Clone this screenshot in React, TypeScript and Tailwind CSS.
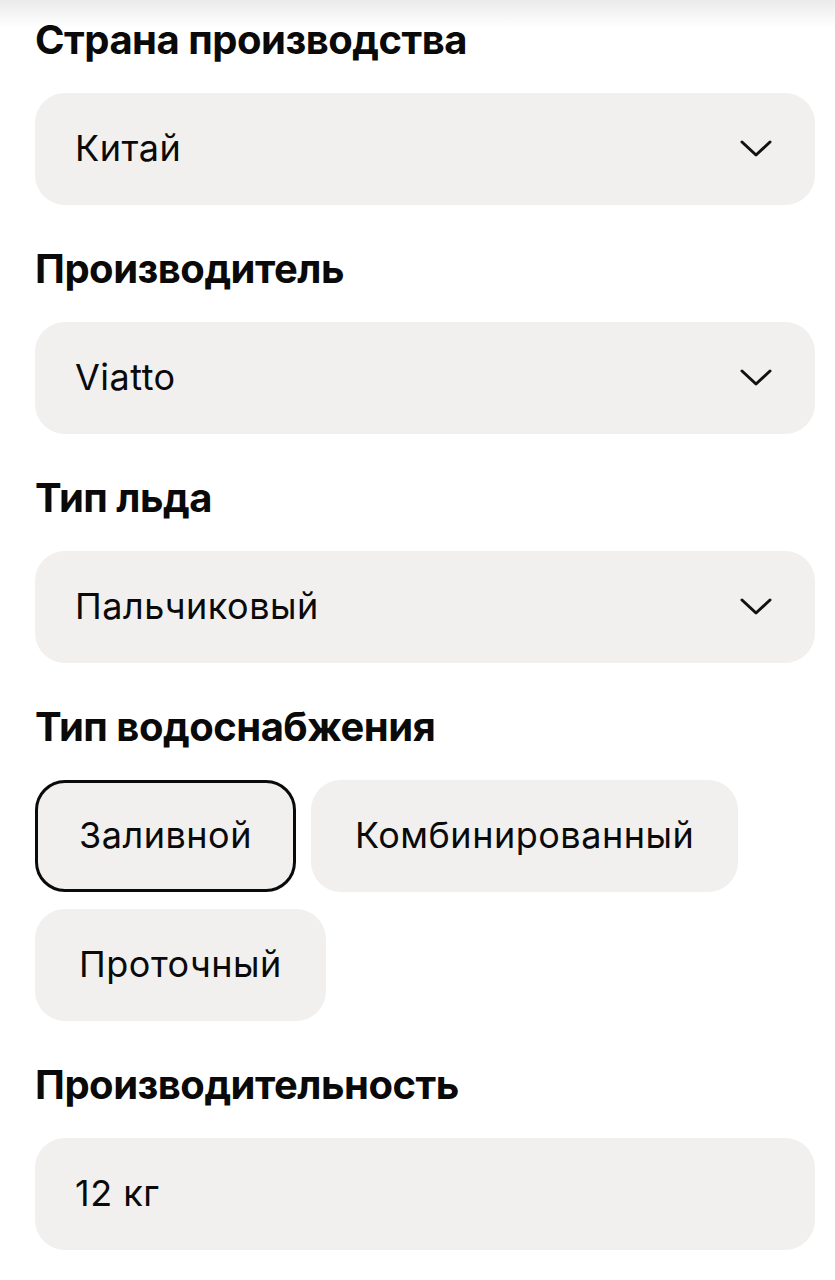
import React from "react";

const Chevron = () => (
  <svg width="34" height="20" viewBox="0 0 34 20" fill="none" className="shrink-0">
    <path d="M3 3 L17 16 L31 3" stroke="#111" strokeWidth="3" strokeLinecap="round" strokeLinejoin="round" />
  </svg>
);

const Heading = ({ children }: { children: React.ReactNode }) => (
  <h2 className="text-[40px] leading-[48px] font-bold tracking-[-0.5px] text-[#0a0a0a] mb-[29px]">{children}</h2>
);

const Select = ({ value }: { value: string }) => (
  <div className="h-[112px] rounded-[30px] bg-[#f1f0ef] flex items-center justify-between pl-[40px] pr-[42px]">
    <span className="text-[36px] tracking-[0.5px] text-[#0a0a0a] -mt-[3px]">{value}</span>
    <Chevron />
  </div>
);

const Chip = ({ label, selected }: { label: string; selected?: boolean }) => (
  <div
    className={
      "h-[112px] rounded-[30px] bg-[#f1f0ef] flex items-center text-[36px] tracking-[0.5px] text-[#0a0a0a] " +
      (selected ? "border-[3px] border-[#0a0a0a] px-[41px]" : "px-[44px]")
    }
  >
    <span className="-mt-[3px]">{label}</span>
  </div>
);

export default function App() {
  return (
    <div className="w-[835px] min-h-[1280px] bg-white relative" style={{ fontFamily: "Inter, 'Noto Sans', sans-serif" }}>
      <div className="absolute top-0 left-0 right-0 h-[28px] bg-gradient-to-b from-[#ebebeb] to-white" />
      <div className="relative px-[35px] pt-[16px] pr-[20px] flex flex-col gap-[40px]">
        <section>
          <Heading>Страна производства</Heading>
          <Select value="Китай" />
        </section>
        <section>
          <Heading>Производитель</Heading>
          <Select value="Viatto" />
        </section>
        <section>
          <Heading>Тип льда</Heading>
          <Select value="Пальчиковый" />
        </section>
        <section>
          <Heading>Тип водоснабжения</Heading>
          <div className="flex flex-wrap gap-x-[15px] gap-y-[17px]">
            <Chip label="Заливной" selected />
            <Chip label="Комбинированный" />
            <Chip label="Проточный" />
          </div>
        </section>
        <section>
          <Heading>Производительность</Heading>
          <div className="h-[112px] rounded-[30px] bg-[#f1f0ef] flex items-center pl-[40px]">
            <span className="text-[36px] tracking-[0.5px] text-[#0a0a0a] -mt-[3px]">12 кг</span>
          </div>
        </section>
      </div>
    </div>
  );
}
